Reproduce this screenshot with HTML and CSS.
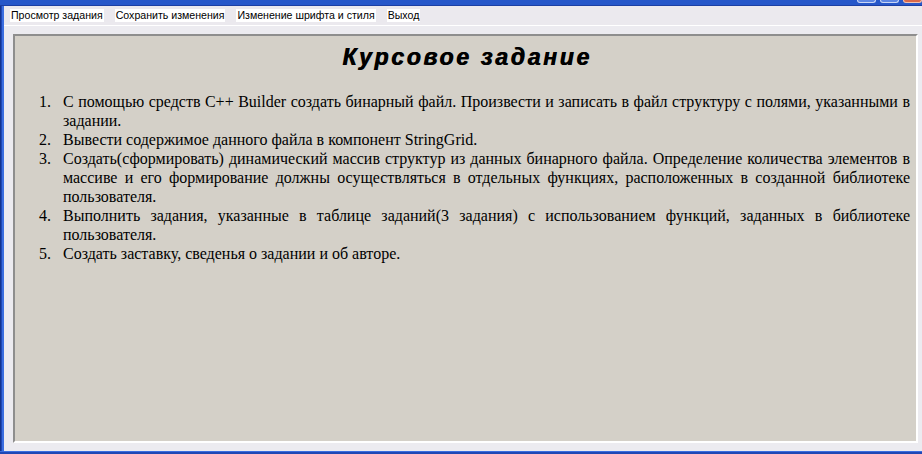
FILE: index.html
```html
<!DOCTYPE html>
<html lang="ru">
<head>
<meta charset="utf-8">
<title>Курсовое задание</title>
<link rel="stylesheet" href="styles.css">
</head>
<body>
<div class="window">
  <div class="titlebar">
    <div class="caption-btns">
      <span class="cbtn"></span>
      <span class="cbtn"></span>
      <span class="cbtn close"></span>
    </div>
  </div>
  <div class="frame">
    <div class="side-border"></div>
    <div class="client">
      <div class="menubar">
        <span class="menu-item">Просмотр задания</span>
        <span class="menu-item">Сохранить изменения</span>
        <span class="menu-item">Изменение шрифта и стиля</span>
        <span class="menu-item">Выход</span>
      </div>
      <div class="workspace">
        <div class="panel">
          <h1 class="title">Курсовое задание</h1>
          <ol class="tasks">
            <li>С помощью средств C++ Builder создать бинарный файл. Произвести и записать в файл структуру с полями, указанными в задании.</li>
            <li>Вывести содержимое данного файла в компонент StringGrid.</li>
            <li>Создать(сформировать) динамический массив структур из данных бинарного файла. Определение количества элементов в массиве и его формирование должны осуществляться в отдельных функциях, расположенных в созданной библиотеке пользователя.</li>
            <li>Выполнить задания, указанные в таблице заданий(3 задания) с использованием функций, заданных в библиотеке пользователя.</li>
            <li>Создать заставку, сведенья о задании и об авторе.</li>
          </ol>
        </div>
      </div>
    </div>
  </div>
  <div class="bottom-border"></div>
</div>
</body>
</html>
```
FILE: styles.css
```css
* { box-sizing: border-box; }
html, body { margin: 0; padding: 0; }
body { width: 922px; height: 454px; overflow: hidden; background: #ecebf0; }

.window { display: flex; flex-direction: column; width: 922px; height: 454px; }

.titlebar {
  height: 6px;
  flex: none;
  background: #2657c9;
  display: flex;
  justify-content: flex-end;
  border-bottom: 1px solid #1c3fa3;
}
.caption-btns { display: flex; gap: 4px; height: 4px; }
.cbtn {
  width: 19px;
  height: 3px;
  background: #5d86e3;
  border: 1px solid #c9d6f5;
  border-top: none;
  border-radius: 0 0 3px 3px;
}
.cbtn.close { background: #d9684a; border-color: #f2c2b0; }

.frame { flex: 1; display: flex; min-height: 0; }
.side-border {
  width: 4px;
  flex: none;
  background: #1f48b5;
  border-right: 2px solid #3b6ee0;
  border-left: 1px solid #14338f;
}
.client { flex: 1; display: flex; flex-direction: column; }

.menubar {
  height: 20px;
  flex: none;
  display: flex;
  align-items: center;
  gap: 11px;
  padding: 0 0 0 6px;
  background: #ebe9ee;
  border-bottom: 1px solid #ffffff;
}
.menu-item {
  font-family: "Liberation Sans", Arial, sans-serif;
  font-size: 10.6px;
  line-height: 13px;
  background: #ffffff;
  color: #000;
  padding: 0 1px;
}

.workspace {
  flex: 1;
  padding: 8px 4px 8px 9px;
  display: flex;
  background: #ecebf0;
}
.panel {
  flex: 1;
  background: #d4d0c8;
  border-top: 2px solid #8e8e8e;
  border-left: 2px solid #8e8e8e;
  border-right: 2px solid #ffffff;
  border-bottom: 2px solid #ffffff;
  padding: 6px 6px 0 0;
}

.title {
  margin: 0;
  padding-left: 9px;
  text-align: center;
  font-family: "Liberation Sans", Arial, sans-serif;
  font-size: 23px;
  font-weight: 900;
  font-style: italic;
  letter-spacing: 2.7px;
  line-height: 30px;
  color: #000;
  text-shadow: 0.7px 0 0 #000;
}

.tasks {
  list-style: none;
  counter-reset: task;
  margin: 20px 0 0 0;
  padding: 0 0 0 24px;
  font-family: "Liberation Serif", "Times New Roman", serif;
  font-size: 16px;
  line-height: 19px;
  color: #000;
}
.tasks li {
  counter-increment: task;
  display: grid;
  grid-template-columns: 24px 1fr;
  text-align: justify;
}
.tasks li::before {
  content: counter(task) ".";
  text-align: left;
}

.bottom-border {
  height: 3px;
  flex: none;
  background: #1f48b5;
  border-top: 1px solid #3b6ee0;
}
```
